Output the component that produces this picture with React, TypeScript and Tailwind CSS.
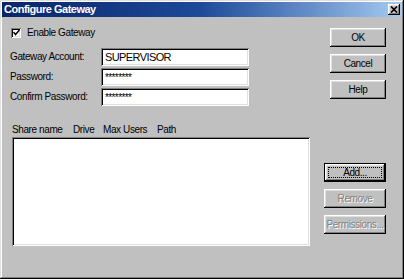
const font = { fontFamily: '"Liberation Sans", Arial, sans-serif' }

const raised =
  'bg-[#c0c0c0] shadow-[inset_-1px_-1px_0_#000,inset_1px_1px_0_#fff,inset_-2px_-2px_0_#808080,inset_2px_2px_0_#dfdfdf]'
const sunken =
  'bg-white shadow-[inset_1px_1px_0_#808080,inset_-1px_-1px_0_#fff,inset_2px_2px_0_#000,inset_-2px_-2px_0_#dfdfdf]'

function Btn({ label, w, disabled, focused }: { label: string; w: string; disabled?: boolean; focused?: boolean }) {
  if (focused) {
    return (
      <div className={`${w} h-[19px] border border-black`}>
        <div className={`${raised} h-full w-full p-[3px]`}>
          <div className="h-full w-full border border-dotted border-black flex items-center justify-center text-black leading-none">
            {label}
          </div>
        </div>
      </div>
    )
  }
  return (
    <div
      className={`${raised} ${w} h-[19px] flex items-center justify-center leading-none ${
        disabled ? 'text-[#808080] [text-shadow:1px_1px_0_#fff]' : 'text-black'
      }`}
    >
      {label}
    </div>
  )
}

function Field({ label, value, secret }: { label: string; value: string; secret?: boolean }) {
  return (
    <div className="flex items-center h-[18px]">
      <div className="w-[99px] shrink-0 pl-[8px] text-black leading-none">{label}</div>
      <div className={`${sunken} w-[148px] h-[18px] flex items-center pl-[4px]`}>
        {secret ? (
          <span className="text-[10px] tracking-[-0.6px] leading-none text-black mt-[1px]">{value}</span>
        ) : (
          <span className="text-black leading-none text-[11px] tracking-[-0.6px]">{value}</span>
        )}
      </div>
    </div>
  )
}

export default function App() {
  return (
    <div
      style={font}
      className="w-[404px] h-[279px] bg-[#c0c0c0] p-[2px] flex flex-col text-[10px] tracking-[-0.4px] shadow-[inset_-1px_-1px_0_#000,inset_1px_1px_0_#dfdfdf,inset_-2px_-2px_0_#808080,inset_2px_2px_0_#fff]"
    >
      <div className="h-[15px] flex items-center justify-between bg-gradient-to-r from-[#0a246a] via-[#1e4a9a] to-[#a6caf0] pl-[2px] pr-[2px]">
        <span className="text-white font-bold text-[11px] tracking-[-0.5px] leading-none">Configure Gateway</span>
        <div className={`${raised} w-[12px] h-[11px] flex items-center justify-center`}>
          <svg width="8" height="7" viewBox="0 0 8 7">
            <path d="M1 0.5 L7 6.5 M7 0.5 L1 6.5" stroke="#000" strokeWidth="1.6" />
          </svg>
        </div>
      </div>

      <div className="flex flex-1">
        <div className="flex-1 flex flex-col">
          <div className="flex items-center mt-[10px] h-[11px] pl-[9px] gap-[6px]">
            <div className={`${sunken} w-[10px] h-[10px] flex items-center justify-center`}>
              <svg width="7" height="7" viewBox="0 0 7 7">
                <path d="M0.5 3 L2.5 5.5 L6.5 1" stroke="#000" strokeWidth="1.5" fill="none" />
              </svg>
            </div>
            <span className="text-black leading-none">Enable Gateway</span>
          </div>

          <div className="flex flex-col gap-[2px] mt-[10px]">
            <Field label="Gateway Account:" value="SUPERVISOR" />
            <Field label="Password:" value="********" secret />
            <Field label="Confirm Password:" value="********" secret />
          </div>

          <div className="flex mt-[18px] h-[12px] items-center pl-[10px] text-black leading-none">
            <span className="w-[61px]">Share name</span>
            <span className="w-[30px]">Drive</span>
            <span className="w-[54px]">Max Users</span>
            <span>Path</span>
          </div>

          <div className={`${sunken} ml-[10px] mt-[1px] w-[298px] h-[109px]`} />
        </div>

        <div className="flex flex-col items-end pr-[16px]">
          <div className="flex flex-col gap-[7px] mt-[11px]">
            <Btn label="OK" w="w-[56px]" />
            <Btn label="Cancel" w="w-[56px]" />
            <Btn label="Help" w="w-[56px]" />
          </div>
          <div className="flex flex-col gap-[7px] mt-[64px]">
            <Btn label="Add..." w="w-[62px]" focused />
            <Btn label="Remove" w="w-[62px]" disabled />
            <Btn label="Permissions..." w="w-[62px]" disabled />
          </div>
        </div>
      </div>
    </div>
  )
}
